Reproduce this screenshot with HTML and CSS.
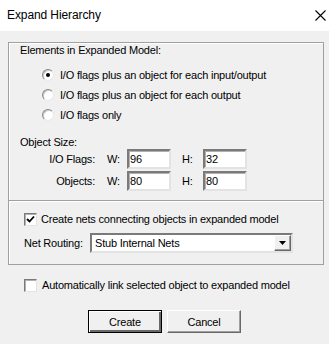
FILE: index.html
```html
<!DOCTYPE html>
<html lang="en">
<head>
  <meta charset="UTF-8">
  <title>Expand Hierarchy</title>
  <link rel="stylesheet" href="styles.css">
</head>
<body>

  <div class="dialog">
    <!-- Title bar -->
    <div class="titlebar">
      <span class="title">Expand Hierarchy</span>
      <svg class="close" width="11" height="11" viewBox="0 0 11 11">
        <path d="M0.5 0.5L10.5 10.5M10.5 0.5L0.5 10.5" stroke="#000" stroke-width="1.1" fill="none"/>
      </svg>
    </div>

    <div class="client">
      <!-- Main group box -->
      <div class="group">
        <div class="section elements">
          <div class="heading">Elements in Expanded Model:</div>
          <div class="radios">
            <div class="radio-row"><span class="radio checked"></span>I/O flags plus an object for each input/output</div>
            <div class="radio-row"><span class="radio"></span>I/O flags plus an object for each output</div>
            <div class="radio-row"><span class="radio"></span>I/O flags only</div>
          </div>

          <div class="heading size-heading">Object Size:</div>
          <div class="size-grid">
            <span class="row-label">I/O Flags:</span>
            <span class="dim">W:</span>
            <input class="field" type="text" value="96">
            <span class="dim dim-h">H:</span>
            <input class="field" type="text" value="32">

            <span class="row-label">Objects:</span>
            <span class="dim">W:</span>
            <input class="field" type="text" value="80">
            <span class="dim dim-h">H:</span>
            <input class="field" type="text" value="80">
          </div>
        </div>

        <div class="section nets">
          <div class="check-row">
            <span class="checkbox">
              <svg width="9" height="9" viewBox="0 0 9 9"><path d="M1 4L3.5 6.5L8 1.5" stroke="#000" stroke-width="1.8" fill="none"/></svg>
            </span>
            Create nets connecting objects in expanded model
          </div>
          <div class="routing-row">
            <span class="routing-label">Net Routing:</span>
            <div class="combo">
              <span class="combo-text">Stub Internal Nets</span>
              <span class="combo-btn">
                <svg width="7" height="4" viewBox="0 0 7 4"><path d="M0 0H7L3.5 4Z" fill="#000"/></svg>
              </span>
            </div>
          </div>
        </div>
      </div>

      <div class="check-row auto-link">
        <span class="checkbox"></span>
        Automatically link selected object to expanded model
      </div>

      <div class="buttons">
        <div class="btn default">Create</div>
        <div class="btn">Cancel</div>
      </div>
    </div>
  </div>

</body>
</html>
```

FILE: styles.css
```css
* {
  box-sizing: border-box;
}

body {
  margin: 0;
  font-family: 'Liberation Sans', Arial, sans-serif;
  font-size: 11px;
  letter-spacing: -0.2px;
  color: #000;
  background: #f0f0f0;
}

.dialog {
  width: 329px;
  height: 344px;
  background: #f0f0f0;
  overflow: hidden;
}

/* Title bar */
.titlebar {
  height: 31px;
  background: #fff;
  display: flex;
  align-items: center;
  justify-content: space-between;
  padding: 0 3px 1px 7px;
}

.title {
  font-size: 12px;
  letter-spacing: -0.1px;
}

.close {
  display: block;
}

/* Group box */
.group {
  margin: 11px 5px 0 8px;
  width: 316px;
  border: 1px solid #a0a0a0;
  box-shadow: inset 1px 1px 0 #fff;
}

.section {
  line-height: 14px;
}

.elements {
  padding: 0 0 9px 0;
}

.heading {
  padding-left: 11px;
}

.radios {
  margin-top: 8px;
}

.radio-row {
  height: 20px;
  display: flex;
  align-items: center;
  padding-left: 33px;
}

.radio {
  width: 12px;
  height: 12px;
  border-radius: 50%;
  background: #fff;
  border: 1px solid;
  border-color: #8a8a8a #e8e8e8 #e8e8e8 #8a8a8a;
  box-shadow: inset 1px 1px 0 #c8c8c8;
  margin-right: 6px;
  display: flex;
  align-items: center;
  justify-content: center;
}

.radio.checked::after {
  content: "";
  width: 4px;
  height: 4px;
  border-radius: 50%;
  background: #000;
}

.size-heading {
  margin-top: 10px;
}

.size-grid {
  display: grid;
  grid-template-columns: 86px 32px 44px 32px 44px;
  grid-auto-rows: 20px;
  row-gap: 2px;
  align-items: center;
}

.row-label {
  text-align: right;
}

.dim {
  padding-left: 12px;
}

.dim-h {
  padding-left: 11px;
}

.field {
  width: 44px;
  height: 20px;
  margin: 0;
  padding: 0 0 0 1px;
  font-family: 'Liberation Sans', Arial, sans-serif;
  font-size: 11px;
  letter-spacing: -0.2px;
  background: #fff;
  border: 2px solid;
  border-color: #7a7a7a #e3e3e3 #e3e3e3 #7a7a7a;
  box-shadow: inset 1px 1px 0 #b0b0b0;
  outline: none;
}

/* Nets section */
.nets {
  border-top: 1px solid #a0a0a0;
  box-shadow: inset 0 1px 0 #fff;
  padding: 10px 0 11px 15px;
}

.check-row {
  height: 16px;
  display: flex;
  align-items: center;
}

.checkbox {
  width: 13px;
  height: 13px;
  background: #fff;
  border: 1px solid;
  border-color: #7a7a7a #e3e3e3 #e3e3e3 #7a7a7a;
  box-shadow: inset 1px 1px 0 #b0b0b0;
  margin-right: 4px;
  display: flex;
  align-items: center;
  justify-content: center;
}

.checkbox svg {
  display: block;
}

.routing-row {
  margin-top: 6px;
  height: 20px;
  display: flex;
  align-items: center;
}

.routing-label {
  width: 66px;
}

.combo {
  width: 203px;
  height: 20px;
  background: #fff;
  border: 2px solid;
  border-color: #7a7a7a #e3e3e3 #e3e3e3 #7a7a7a;
  display: flex;
  align-items: center;
  justify-content: space-between;
}

.combo-text {
  padding-left: 3px;
}

.combo-btn {
  width: 17px;
  height: 16px;
  background: #f0f0f0;
  border: 1px solid;
  border-color: #fff #696969 #696969 #fff;
  box-shadow: inset -1px -1px 0 #a0a0a0;
  display: flex;
  align-items: center;
  justify-content: center;
}

.combo-btn svg {
  display: block;
}

/* Auto link row */
.auto-link {
  margin: 12px 0 0 24px;
}

.auto-link .checkbox {
  margin-right: 5px;
}

/* Buttons */
.buttons {
  margin-top: 17px;
  display: flex;
  justify-content: center;
  gap: 5px;
}

.btn {
  width: 74px;
  height: 23px;
  background: #f0f0f0;
  border: 1px solid;
  border-color: #fff #696969 #696969 #fff;
  box-shadow: inset -1px -1px 0 #a0a0a0;
  display: flex;
  align-items: center;
  justify-content: center;
}

.btn.default {
  border: 1px solid #000;
  box-shadow: inset 1px 1px 0 #fff, inset -2px -2px 0 #696969;
}
```
